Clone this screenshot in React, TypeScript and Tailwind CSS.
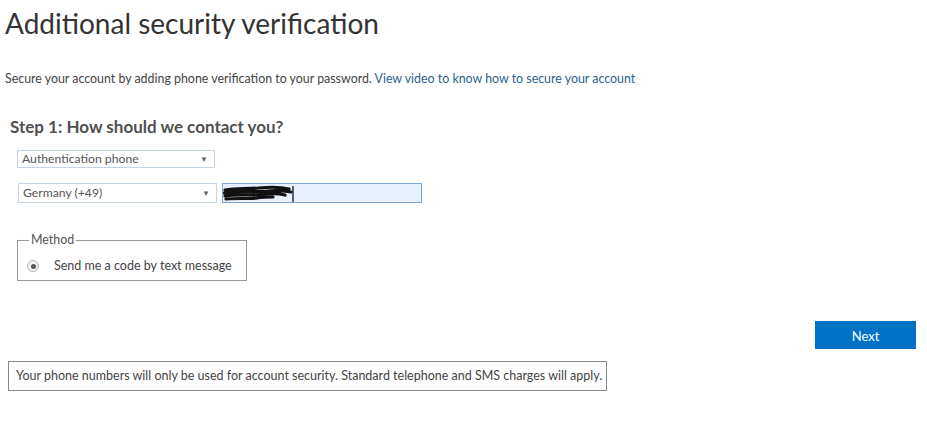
export default function App() {
  return (
    <div
      className="relative h-[430px] w-[927px] bg-white text-[#444]"
      style={{ fontFamily: "Lato, 'Liberation Sans', sans-serif" }}
    >
      <h1 className="pl-[5px] pt-[5px] text-[28px] font-normal leading-[36px] text-[#333]">
        Additional security verification
      </h1>

      <p className="mt-[30px] pl-[5px] text-[12.4px] leading-[16px]">
        Secure your account by adding phone verification to your password.{" "}
        <a className="text-[#2b5f91]" href="#">
          View video to know how to secure your account
        </a>
      </p>

      <h2 className="mt-[29px] pl-[10px] text-[17px] font-bold leading-[22px] text-[#505050]">
        Step 1: How should we contact you?
      </h2>

      <div className="mt-[12px] pl-[17px]">
        <div className="flex h-[18px] w-[198px] items-center justify-between border border-[#c5d4e4] pl-[4px] pr-[6px] text-[12.2px] text-[#555]">
          <span>Authentication phone</span>
          <span className="text-[8px] text-[#666]">▼</span>
        </div>
      </div>

      <div className="mt-[15px] flex items-center gap-[5px] pl-[18px]">
        <div className="flex h-[20px] w-[199px] items-center justify-between border border-[#c5d4e4] pl-[4px] pr-[6px] text-[12.2px] text-[#555]">
          <span>Germany (+49)</span>
          <span className="text-[8px] text-[#666]">▼</span>
        </div>
        <div className="relative h-[20px] w-[200px] border border-[#7ea6d6] bg-[#e8f0fd]">
          <svg className="absolute left-0 top-[1px]" width="74" height="18" viewBox="0 0 74 18">
            <path
              d="M2 5 C12 3 24 4 36 3 C46 2 58 2 66 4 M1 8 C14 6 30 7 44 6 C54 5 62 6 68 7 M2 11 C16 9 30 11 44 9 C52 8 58 9 62 10 M3 14 C14 13 24 14 34 13 C40 12 46 12 50 12"
              stroke="#111"
              strokeWidth="3.2"
              fill="none"
              strokeLinecap="round"
            />
            <path d="M70 1 L70 17" stroke="#111" strokeWidth="1.3" />
          </svg>
        </div>
      </div>

      <div className="mt-[31px] pl-[17px]">
        <fieldset className="h-[47px] w-[230px] border border-[#9a9a9a] px-[8px]">
          <legend className="ml-[3px] px-[2px] text-[12.4px] leading-[12px] text-[#555]">Method</legend>
          <label className="mt-[11px] flex items-center gap-[15px] text-[12.5px] text-[#444]">
            <span className="ml-[1px] flex h-[12px] w-[12px] items-center justify-center rounded-full border border-[#b8b8b8] bg-[#f0f0f0]">
              <span className="h-[5px] w-[5px] rounded-full bg-[#555]" />
            </span>
            <span>Send me a code by text message</span>
          </label>
        </fieldset>
      </div>

      <div className="mt-[40px] flex justify-end pr-[11px]">
        <button className="h-[28px] w-[101px] bg-[#0072c6] pt-[3px] text-[13px] text-white">Next</button>
      </div>

      <div className="mt-[12px] pl-[8px]">
        <div className="flex h-[30px] w-[599px] items-center border border-[#888] pl-[7px] text-[12.5px] text-[#444]">
          Your phone numbers will only be used for account security. Standard telephone and SMS charges will apply.
        </div>
      </div>
    </div>
  );
}
